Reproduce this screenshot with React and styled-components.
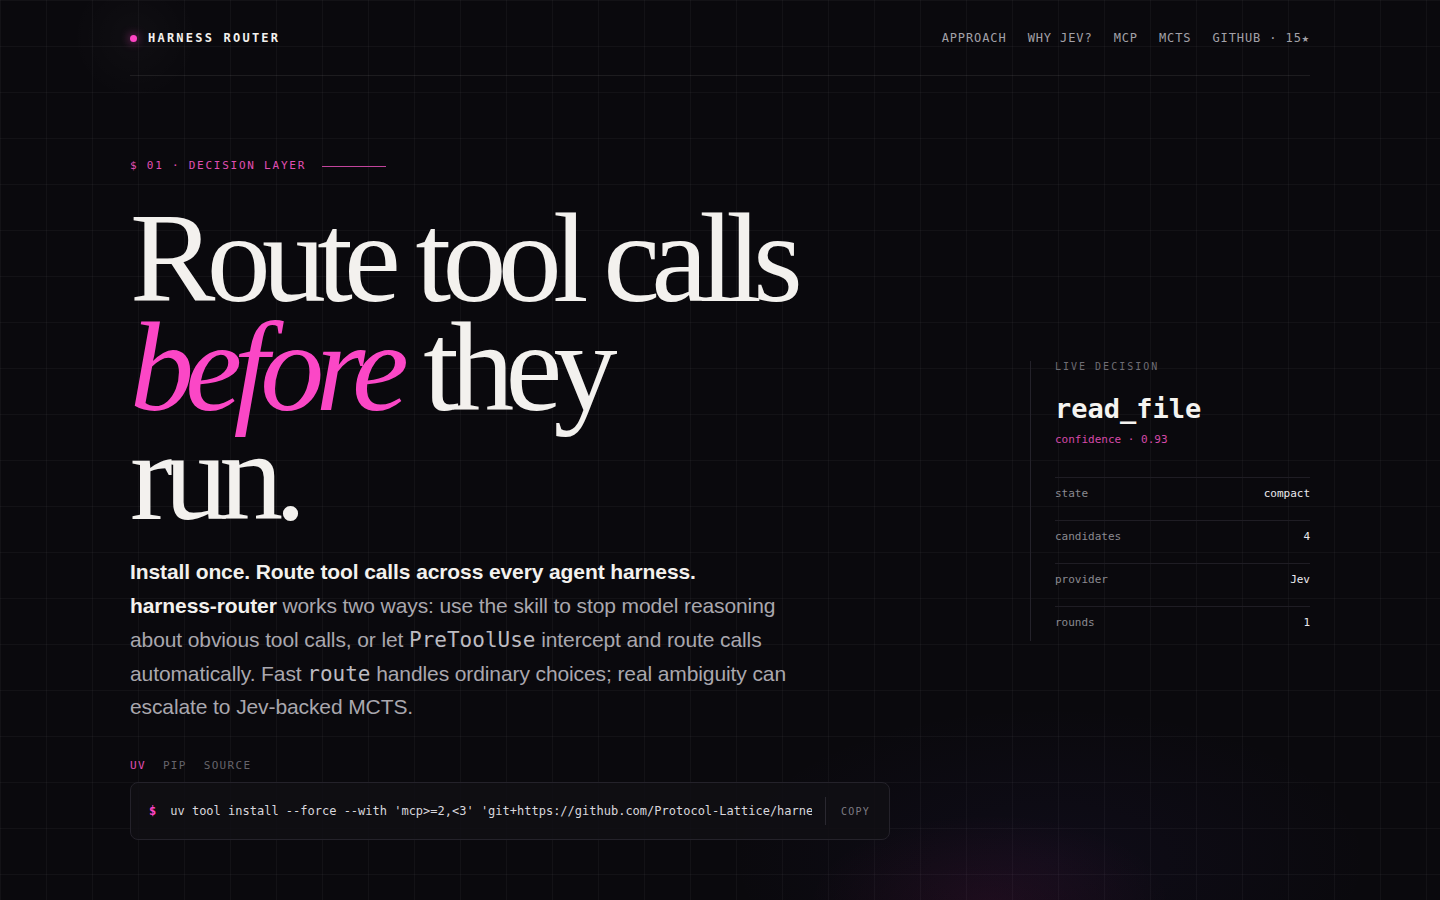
import React from 'react'
import styled, { createGlobalStyle } from 'styled-components'

const mono = `"DejaVu Sans Mono", "Liberation Mono", monospace`
const serif = `"Liberation Serif", "Times New Roman", serif`
const sans = `"Liberation Sans", Arial, sans-serif`
const pink = '#ff45c5'

const GlobalStyle = createGlobalStyle`
  html, body {
    margin: 0;
    padding: 0;
    background: #0a090d;
  }
  * { box-sizing: border-box; }
`

const Page = styled.div`
  height: 900px;
  overflow: hidden;
  color: #f3f1ee;
  background-color: #0a090d;
  background-image:
    radial-gradient(ellipse 260px 130px at 990px 905px, rgba(255, 40, 150, 0.07), transparent 70%),
    radial-gradient(ellipse 460px 220px at 1050px 860px, rgba(90, 60, 200, 0.06), transparent 70%),
    radial-gradient(circle 90px at 135px 37px, rgba(255, 255, 255, 0.025), transparent 70%),
    linear-gradient(rgba(255, 255, 255, 0.035) 1px, transparent 1px),
    linear-gradient(90deg, rgba(255, 255, 255, 0.035) 1px, transparent 1px);
  background-size: 100% 100%, 100% 100%, 100% 100%, 46px 46px, 46px 46px;
`

const Wrap = styled.div`
  width: 1180px;
  margin: 0 auto;
`

const Header = styled.header`
  display: flex;
  justify-content: space-between;
  align-items: center;
  padding: 30px 0 29px;
  border-bottom: 1px solid rgba(255, 255, 255, 0.08);
`

const Brand = styled.div`
  display: flex;
  align-items: center;
  gap: 11px;
  font-family: ${mono};
  font-weight: 700;
  font-size: 12px;
  line-height: 16px;
  letter-spacing: 0.185em;
  color: #f3f1ee;
`

const Dot = styled.span`
  width: 7px;
  height: 7px;
  border-radius: 50%;
  background: ${pink};
  box-shadow: 0 0 10px rgba(255, 69, 197, 0.7);
`

const Nav = styled.nav`
  display: flex;
  gap: 21px;
`

const NavLink = styled.a`
  font-family: ${mono};
  font-size: 12px;
  line-height: 16px;
  letter-spacing: 0.075em;
  color: #a3a1a8;
  text-decoration: none;
`

const Hero = styled.section`
  display: grid;
  grid-template-columns: 1fr 280px;
  align-items: center;
  padding-top: 82px;
`

const Left = styled.div`
  display: flex;
  flex-direction: column;
`

const Eyebrow = styled.div`
  display: flex;
  align-items: center;
  gap: 16px;
  font-family: ${mono};
  font-size: 11px;
  line-height: 16px;
  letter-spacing: 0.16em;
  color: #e04fb4;

  &::after {
    content: '';
    width: 64px;
    height: 1px;
    background: #c2449c;
  }
`

const Title = styled.h1`
  margin: 30px 0 0;
  font-family: ${serif};
  font-weight: 400;
  font-size: 128px;
  line-height: 0.85;
  letter-spacing: -0.068em;
  color: #f3f1ee;
`

const Accent = styled.em`
  font-style: italic;
  color: #fb47c6;
`

const Lead = styled.p`
  margin: 25px 0 0;
  max-width: 680px;
  font-family: ${sans};
  font-size: 21px;
  line-height: 33.75px;
  letter-spacing: -0.005em;
  color: #a9a7ae;
`

const Strong = styled.strong`
  display: ${p => (p.$block ? 'block' : 'inline')};
  font-weight: 700;
  color: #f3f1ee;
`

const Code = styled.code`
  font-family: ${mono};
  font-size: 1em;
  line-height: 1;
  letter-spacing: 0;
  color: #bdbbc1;
`

const Tabs = styled.div`
  display: flex;
  gap: 17px;
  margin-top: 34px;
`

const Tab = styled.span`
  font-family: ${mono};
  font-size: 11px;
  line-height: 16px;
  letter-spacing: 0.12em;
  color: ${p => (p.$active ? '#e04fb4' : '#66646b')};
`

const Install = styled.div`
  display: flex;
  align-items: center;
  width: 760px;
  height: 58px;
  margin-top: 8px;
  padding: 0 19px 0 18px;
  border: 1px solid #24222a;
  border-radius: 8px;
  background: rgba(16, 15, 20, 0.85);
  font-family: ${mono};
  font-size: 12px;
`

const Prompt = styled.span`
  flex: none;
  margin-right: 14px;
  font-weight: 700;
  color: ${pink};
`

const Command = styled.span`
  flex: 1;
  min-width: 0;
  overflow: hidden;
  white-space: nowrap;
  color: #d9d7dd;
`

const Copy = styled.button`
  flex: none;
  display: flex;
  align-items: center;
  height: 28px;
  margin-left: 13px;
  padding: 0 0 0 15px;
  border: none;
  border-left: 1px solid #2a2830;
  background: none;
  font-family: ${mono};
  font-size: 10px;
  letter-spacing: 0.12em;
  color: #7d7b82;
`

const Panel = styled.aside`
  margin-top: 4px;
  padding: 0 0 0 24px;
  border-left: 1px solid #24222a;
  font-family: ${mono};
`

const PanelLabel = styled.div`
  font-size: 10px;
  line-height: 12px;
  letter-spacing: 0.2em;
  color: #6f6d74;
`

const Decision = styled.div`
  margin-top: 20px;
  font-size: 27px;
  font-weight: 700;
  line-height: 32px;
  color: #f5f3f0;
`

const Confidence = styled.div`
  margin-top: 8px;
  font-size: 11px;
  line-height: 14px;
  color: #d64aa9;
`

const Rows = styled.div`
  margin-top: 30px;
`

const Row = styled.div`
  display: flex;
  justify-content: space-between;
  align-items: flex-start;
  height: 43px;
  padding-top: 9px;
  border-top: 1px solid #1f1d24;
  font-size: 11px;
  line-height: 14px;

  &:last-child {
    height: 35px;
  }
`

const Key = styled.span`
  color: #8b8990;
`

const Value = styled.span`
  color: #ebe9ee;
`

const rows = [
  ['state', 'compact'],
  ['candidates', '4'],
  ['provider', 'Jev'],
  ['rounds', '1'],
]

export default function App() {
  return (
    <Page>
      <GlobalStyle />
      <Wrap>
        <Header>
          <Brand>
            <Dot />
            HARNESS ROUTER
          </Brand>
          <Nav>
            <NavLink href="#approach">APPROACH</NavLink>
            <NavLink href="#why">WHY JEV?</NavLink>
            <NavLink href="#mcp">MCP</NavLink>
            <NavLink href="#mcts">MCTS</NavLink>
            <NavLink href="#github">GITHUB · 15★</NavLink>
          </Nav>
        </Header>

        <Hero>
          <Left>
            <Eyebrow>$ 01 · DECISION LAYER</Eyebrow>
            <Title>
              Route tool calls
              <br />
              <Accent>before</Accent> they
              <br />
              run.
            </Title>
            <Lead>
              <Strong $block>Install once. Route tool calls across every agent harness.</Strong>
              <Strong>harness-router</Strong> works two ways: use the skill to stop model reasoning
              about obvious tool calls, or let <Code>PreToolUse</Code> intercept and route calls
              automatically. Fast <Code>route</Code> handles ordinary choices; real ambiguity can
              escalate to Jev-backed MCTS.
            </Lead>
            <Tabs>
              <Tab $active>UV</Tab>
              <Tab>PIP</Tab>
              <Tab>SOURCE</Tab>
            </Tabs>
            <Install>
              <Prompt>$</Prompt>
              <Command>
                uv tool install --force --with 'mcp&gt;=2,&lt;3' 'git+https://github.com/Protocol-Lattice/harness-router'
              </Command>
              <Copy>COPY</Copy>
            </Install>
          </Left>

          <Panel>
            <PanelLabel>LIVE DECISION</PanelLabel>
            <Decision>read_file</Decision>
            <Confidence>confidence · 0.93</Confidence>
            <Rows>
              {rows.map(([k, v]) => (
                <Row key={k}>
                  <Key>{k}</Key>
                  <Value>{v}</Value>
                </Row>
              ))}
            </Rows>
          </Panel>
        </Hero>
      </Wrap>
    </Page>
  )
}
